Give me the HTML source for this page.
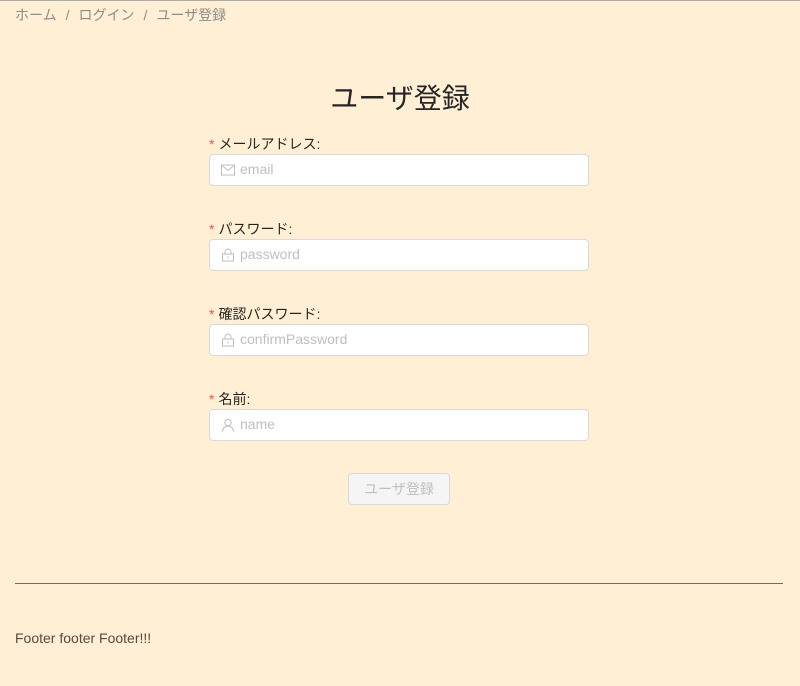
<!DOCTYPE html>
<html><head><meta charset="utf-8"><style>
html,body{margin:0;padding:0;}
body{width:800px;height:686px;background:#FFEFD5;position:relative;overflow:hidden;font-family:"Liberation Sans","Noto Sans CJK JP",sans-serif;font-size:14px;color:rgba(0,0,0,.85);border-top:1px solid #aaa;box-sizing:border-box;}
.a{position:absolute;}
.bc{left:15px;top:4px;color:#8c8c8c;font-size:14px;white-space:nowrap;}
.bc span{margin:0 9px;}
.title{left:0;width:800px;top:76px;text-align:center;font-size:28px;color:#262626;}
.lbl{left:209px;font-size:14px;white-space:nowrap;}
.lbl b{color:#ff4d4f;font-weight:normal;margin-right:4px;font-family:SimSun,"Liberation Sans",sans-serif;}
.inp{left:209px;width:378px;height:30px;background:#fff;border:1px solid #d9d9d9;border-radius:4px;}
.inp svg{position:absolute;left:11px;top:8px;}
.inp span{position:absolute;left:30px;top:6px;color:#bfbfbf;font-size:14px;}
.btn{left:348px;top:472px;width:100px;height:30px;border:1px solid #d9d9d9;border-radius:4px;background:#f5f5f5;color:#bfbfbf;text-align:center;line-height:30px;font-size:14px;}
.hr{left:15px;top:582px;width:768px;height:1px;background:#7a6a5a;}
.ft{left:15px;top:629px;font-size:14px;color:#5a4a3a;}
</style></head><body>
<div class="a bc">ホーム<span>/</span>ログイン<span>/</span>ユーザ登録</div>
<div class="a title">ユーザ登録</div>

<div class="a lbl" style="top:133px"><b>*</b>メールアドレス:</div>
<div class="a inp" style="top:153px"><svg width="14" height="14" viewBox="0 0 14 14"><rect x="0.5" y="2" width="13" height="10" fill="none" stroke="#bfbfbf"/><path d="M1 2.5L7 7.5L13 2.5" fill="none" stroke="#bfbfbf"/></svg><span>email</span></div>

<div class="a lbl" style="top:218px"><b>*</b>パスワード:</div>
<div class="a inp" style="top:238px"><svg width="14" height="14" viewBox="0 0 14 14"><rect x="1.5" y="6" width="11" height="7" fill="none" stroke="#bfbfbf"/><path d="M4 6V4a3 3 0 0 1 6 0v2M7 8.5v2" fill="none" stroke="#bfbfbf"/></svg><span>password</span></div>

<div class="a lbl" style="top:303px"><b>*</b>確認パスワード:</div>
<div class="a inp" style="top:323px"><svg width="14" height="14" viewBox="0 0 14 14"><rect x="1.5" y="6" width="11" height="7" fill="none" stroke="#bfbfbf"/><path d="M4 6V4a3 3 0 0 1 6 0v2M7 8.5v2" fill="none" stroke="#bfbfbf"/></svg><span>confirmPassword</span></div>

<div class="a lbl" style="top:388px"><b>*</b>名前:</div>
<div class="a inp" style="top:408px"><svg width="14" height="14" viewBox="0 0 14 14"><circle cx="7" cy="4.5" r="3.2" fill="none" stroke="#bfbfbf"/><path d="M1.5 13.5a5.5 5.5 0 0 1 11 0" fill="none" stroke="#bfbfbf"/></svg><span>name</span></div>

<div class="a btn">ユーザ登録</div>
<div class="a hr"></div>
<div class="a ft">Footer footer Footer!!!</div>
</body></html>
